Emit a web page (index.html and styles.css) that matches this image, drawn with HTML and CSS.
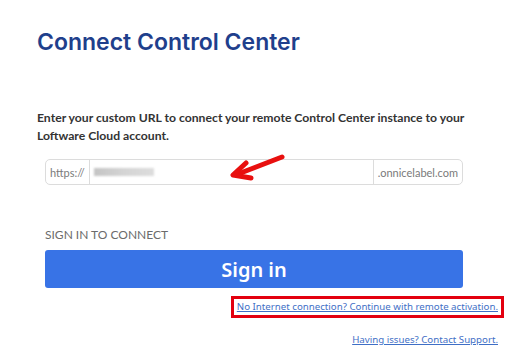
FILE: index.html
```html
<!DOCTYPE html>
<html lang="en">
<head>
  <meta charset="UTF-8">
  <title>Connect Control Center</title>
  <link rel="stylesheet" href="styles.css">
</head>
<body>
  <main class="page">
    <h1 class="title">Connect Control Center</h1>

    <p class="intro">Enter your custom URL to connect your remote Control Center instance to your Loftware Cloud account.</p>

    <div class="url-field">
      <span class="prefix">https://</span>
      <span class="value"><span class="blurred"></span></span>
      <span class="suffix">.onnicelabel.com</span>
      <svg class="arrow" width="60" height="30" viewBox="0 0 60 30">
        <path d="M52 3 L8 20" stroke="#e8100f" stroke-width="5" stroke-linecap="round" fill="none"/>
        <path d="M16 9 L3 21 L21 24" stroke="#e8100f" stroke-width="5" stroke-linecap="round" stroke-linejoin="round" fill="none"/>
      </svg>
    </div>

    <section class="signin">
      <div class="signin-label">SIGN IN TO CONNECT</div>
      <button class="btn-primary">Sign in</button>
    </section>

    <div class="links">
      <a href="#" class="link highlighted">No Internet connection? Continue with remote activation.</a>
      <a href="#" class="link">Having issues? Contact Support.</a>
    </div>
  </main>
</body>
</html>
```

FILE: styles.css
```css
:root {
  --title: #1f3f8c;
  --text: #333333;
  --muted: #6b6b6b;
  --border: #dcdcdc;
  --primary: #3873e6;
  --link: #3f6fc6;
  --mark: #e3000f;
}

* {
  box-sizing: border-box;
}

body {
  margin: 0;
  background: #ffffff;
  font-family: Lato, sans-serif;
  color: var(--text);
}

.page {
  padding: 27px 7px 0 37px;
}

.title {
  margin: 0;
  font-family: Inter, sans-serif;
  font-size: 23px;
  font-weight: 600;
  line-height: 30px;
  color: var(--title);
}

.intro {
  margin: 52px 0 0;
  font-size: 12.2px;
  font-weight: 700;
  line-height: 18px;
  color: var(--text);
  max-width: 462px;
}

.url-field {
  position: relative;
  display: flex;
  margin: 14px 0 0 8px;
  width: 418px;
  height: 26px;
  border: 1px solid var(--border);
  border-radius: 5px;
  font-size: 11px;
  color: #7a7a7a;
}

.prefix {
  display: flex;
  align-items: center;
  padding: 0 4px;
  border-right: 1px solid var(--border);
}

.value {
  flex: 1;
  display: flex;
  align-items: center;
  padding-left: 4px;
}

.blurred {
  width: 60px;
  height: 8px;
  background: linear-gradient(to right, #c4c4c4, #d4d4d4, #dddddd);
  filter: blur(1px);
}

.suffix {
  display: flex;
  align-items: center;
  padding: 0 4px;
  border-left: 1px solid var(--border);
}

.arrow {
  position: absolute;
  left: 184px;
  top: -6px;
}

.signin {
  margin: 42px 0 0 8px;
  width: 418px;
}

.signin-label {
  font-size: 12px;
  color: var(--muted);
  line-height: 16px;
}

.btn-primary {
  display: block;
  width: 100%;
  height: 38px;
  margin-top: 7px;
  border: none;
  border-radius: 3px;
  background: var(--primary);
  color: #ffffff;
  font-family: 'Noto Sans', sans-serif;
  font-size: 20px;
  font-weight: 600;
  cursor: pointer;
}

.links {
  display: flex;
  flex-direction: column;
  align-items: flex-end;
  gap: 19px;
  margin-top: 12px;
  padding-right: 4px;
}

.link {
  font-family: 'Noto Sans', sans-serif;
  font-size: 9.7px;
  color: var(--link);
  line-height: 14px;
}

.highlighted {
  outline: 3px solid var(--mark);
  outline-offset: 1px;
  margin-right: -2px;
  padding: 0 2px;
}
```
